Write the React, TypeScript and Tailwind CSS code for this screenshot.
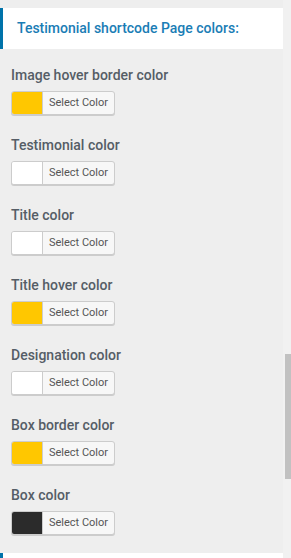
import React from 'react';

const rows: { label: string; color: string }[] = [
  { label: 'Image hover border color', color: '#ffc700' },
  { label: 'Testimonial color', color: '#ffffff' },
  { label: 'Title color', color: '#ffffff' },
  { label: 'Title hover color', color: '#ffc700' },
  { label: 'Designation color', color: '#ffffff' },
  { label: 'Box border color', color: '#ffc700' },
  { label: 'Box color', color: '#2b2b2b' },
];

const ColorPicker: React.FC<{ color: string }> = ({ color }) => (
  <button className="flex h-[24px] w-[104px] overflow-hidden rounded-[3px] border border-[#cccccc] bg-[#f7f7f7] shadow-[0_1px_0_#cccccc]">
    <span className="h-full w-[31px] shrink-0 border-r border-[#cccccc]" style={{ backgroundColor: color }} />
    <span className="flex flex-1 items-center justify-center text-[11px] text-[#555555]">Select Color</span>
  </button>
);

export default function App() {
  return (
    <div className="flex h-[558px] w-[291px] overflow-hidden bg-[#eeeeee] font-['Roboto',sans-serif]">
      <div className="flex w-[283px] shrink-0 flex-col pt-[8px]">
        <div className="flex h-[41px] shrink-0 items-center border-l-[3px] border-[#0073aa] bg-white pl-[14px]">
          <h2 className="text-[14px] font-medium text-[#1a7db5]">Testimonial shortcode Page colors:</h2>
        </div>
        <div className="flex shrink-0 flex-col gap-[20px] px-[11px] pt-[16px] pb-[18px]">
          {rows.map((r) => (
            <div key={r.label} className="flex flex-col gap-[6px]">
              <span className="text-[14px] leading-[20px] font-medium text-[#555d66]">{r.label}</span>
              <ColorPicker color={r.color} />
            </div>
          ))}
        </div>
        <div className="h-[20px] shrink-0 border-l-[3px] border-[#0073aa] bg-white" />
      </div>
      <div className="w-[8px] shrink-0 bg-[#f1f1f1] pl-[2px]">
        <div className="mt-[354px] h-[125px] w-[6px] bg-[#c1c1c1]" />
      </div>
    </div>
  );
}
